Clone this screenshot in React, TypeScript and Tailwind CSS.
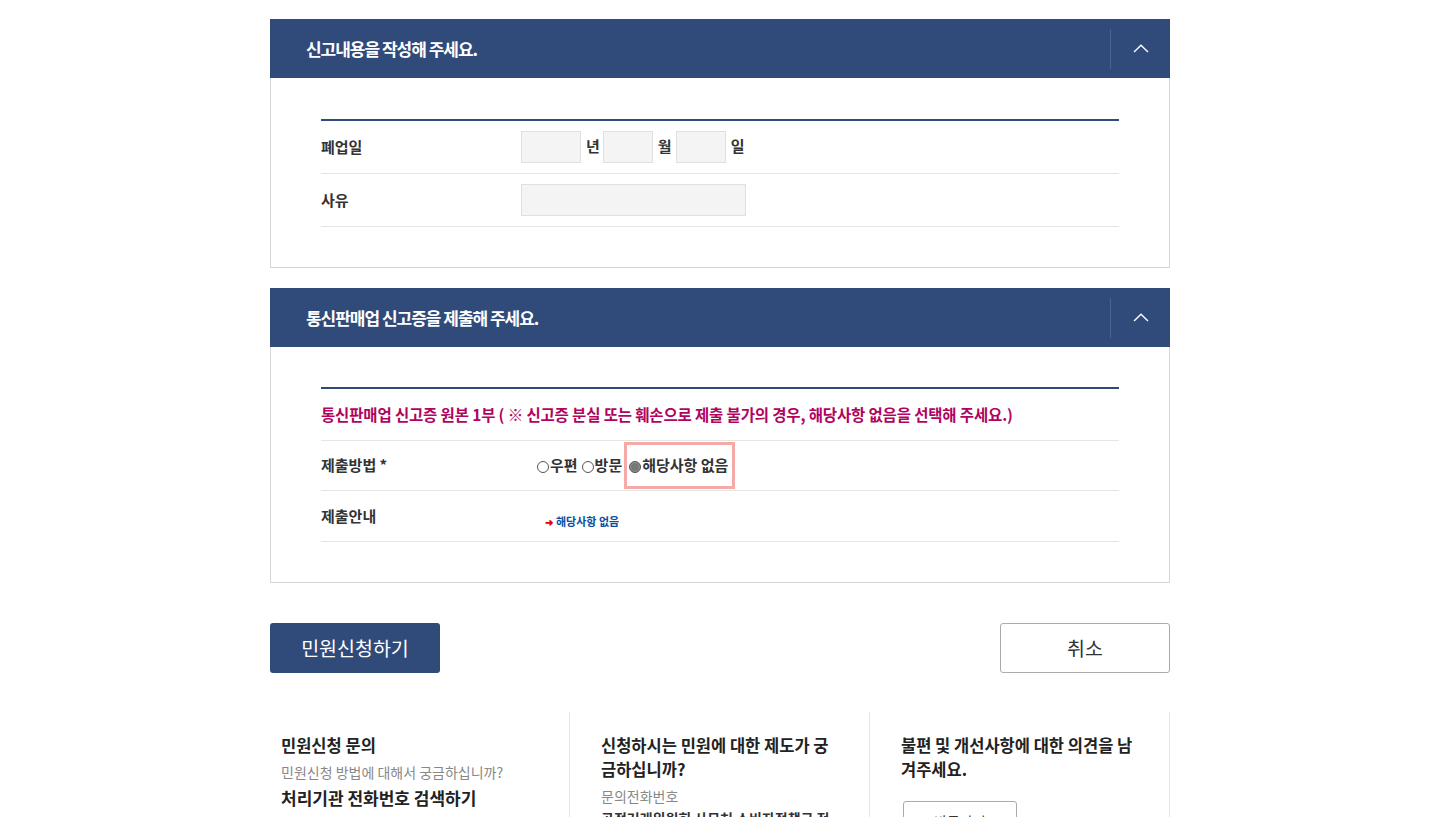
const font = { fontFamily: '"Noto Sans CJK KR", "Noto Sans", sans-serif' }

function SectionHeader({ title }: { title: string }) {
  return (
    <div className="flex h-[59px] items-center bg-[#304a7a] pl-[36px]">
      <h2 className="flex-1 text-[17px] font-bold tracking-[-0.06em] text-white">{title}</h2>
      <div className="h-[40px] w-px bg-[#4a6290]" />
      <button type="button" className="flex h-full w-[59px] items-center justify-center text-white" aria-label="접기">
        <svg width="16" height="9" viewBox="0 0 16 9" fill="none" stroke="currentColor" strokeWidth="1.4">
          <polyline points="1,8 8,1.2 15,8" />
        </svg>
      </button>
    </div>
  )
}

function Row({ label, children, className = '' }: { label: string; children?: React.ReactNode; className?: string }) {
  return (
    <div className={`flex border-b border-[#e5e5e5] ${className}`}>
      <div className="w-[200px] shrink-0 text-[15px] font-bold text-[#333]">{label}</div>
      <div className="flex-1">{children}</div>
    </div>
  )
}

function Radio({ label, checked }: { label: string; checked?: boolean }) {
  return (
    <label className="flex items-center">
      <span
        className={`mt-[3px] mr-px inline-block h-[12px] w-[12px] rounded-full border ${
          checked ? 'border-[#555] bg-[#777] shadow-[inset_0_0_0_1px_#999]' : 'border-[#555] bg-white'
        }`}
      />
      <span>{label}</span>
    </label>
  )
}

export default function App() {
  return (
    <div style={font} className="min-h-[817px] bg-white pt-[19px]">
      <div className="mx-auto w-[900px]">
        <section>
          <SectionHeader title="신고내용을 작성해 주세요." />
          <div className="border border-t-0 border-[#d5d5d5] px-[50px] pt-[41px] pb-[40px]">
            <div className="border-t-2 border-[#304a7a]">
              <Row label="폐업일" className="h-[53px] items-center">
                <div className="-mt-[1px] flex items-center text-[15px] font-bold text-[#333]">
                  <input className="h-[32px] w-[60px] border border-[#e0e0e0] bg-[#f4f4f4]" />
                  <span className="mr-[3px] ml-[5px]">년</span>
                  <input className="h-[32px] w-[50px] border border-[#e0e0e0] bg-[#f4f4f4]" />
                  <span className="mr-[4px] ml-[5px]">월</span>
                  <input className="h-[32px] w-[50px] border border-[#e0e0e0] bg-[#f4f4f4]" />
                  <span className="ml-[5px]">일</span>
                </div>
              </Row>
              <Row label="사유" className="h-[53px] items-center">
                <input className="h-[32px] w-[225px] border border-[#e0e0e0] bg-[#f4f4f4]" />
              </Row>
            </div>
          </div>
        </section>

        <section className="mt-[20px]">
          <SectionHeader title="통신판매업 신고증을 제출해 주세요." />
          <div className="border border-t-0 border-[#d5d5d5] px-[50px] pt-[40px] pb-[40px]">
            <div className="border-t-2 border-[#304a7a]">
              <div className="flex h-[52px] items-center border-b border-[#e5e5e5] text-[15.5px] font-bold tracking-[-0.01em] text-[#b0045f]">
                통신판매업 신고증 원본 1부 ( ※ 신고증 분실 또는 훼손으로 제출 불가의 경우, 해당사항 없음을 선택해 주세요.)
              </div>
              <Row label="제출방법 *" className="h-[50px] items-center">
                <div className="ml-[16px] flex items-center text-[15px] font-bold text-[#333]">
                  <Radio label="우편" />
                  <span className="w-[4px]" />
                  <Radio label="방문" />
                  <div className="ml-[2px] flex h-[47px] items-center border-[3px] border-[#f5aaa8] pr-[4px] pl-[2px]">
                    <Radio label="해당사항 없음" checked />
                  </div>
                </div>
              </Row>
              <Row label="제출안내" className="h-[51px] items-center">
                <div className="mt-[10px] ml-[24px] flex items-center text-[11px] font-bold text-[#0d4f9e]">
                  <span className="mr-[3px] text-[10px] text-[#e3000f]">➜</span>
                  해당사항 없음
                </div>
              </Row>
            </div>
          </div>
        </section>

        <div className="mt-[40px] flex justify-between">
          <button type="button" className="h-[50px] w-[170px] rounded-[3px] bg-[#304a7a] text-[19.5px] text-white">
            민원신청하기
          </button>
          <button type="button" className="h-[50px] w-[170px] rounded-[3px] border border-[#aaa] bg-white text-[19.5px] text-[#333]">
            취소
          </button>
        </div>

        <div className="mt-[39px] grid grid-cols-3">
          <div className="border-r border-[#e5e5e5] pt-[21px] pr-[30px] pl-[11px]">
            <h3 className="text-[16.5px] leading-[24px] font-bold text-[#222]">민원신청 문의</h3>
            <p className="mt-[3px] text-[14px] leading-[24px] text-[#888]">민원신청 방법에 대해서 궁금하십니까?</p>
            <p className="mt-[1px] text-[17px] leading-[26px] font-bold text-[#222]">처리기관 전화번호 검색하기</p>
          </div>
          <div className="border-r border-[#e5e5e5] pt-[21px] pr-[30px] pl-[31px]">
            <h3 className="text-[16.5px] leading-[24px] font-bold break-all text-[#222]">신청하시는 민원에 대한 제도가 궁금하십니까?</h3>
            <p className="mt-[5px] text-[14px] leading-[20px] text-[#888]">문의전화번호</p>
            <p className="text-[14px] leading-[24px] font-bold text-[#333]">공정거래위원회 사무처 소비자정책국 전자거래정책과</p>
          </div>
          <div className="border-r border-[#e5e5e5] pt-[21px] pr-[30px] pl-[31px]">
            <h3 className="text-[16.5px] leading-[24px] font-bold text-[#222]">불편 및 개선사항에 대한 의견을 남겨주세요.</h3>
            <button type="button" className="mt-[20px] ml-[2px] h-[40px] w-[114px] rounded-[3px] border border-[#aaa] text-[14px] text-[#333]">
              바로가기
            </button>
          </div>
        </div>
      </div>
    </div>
  )
}
